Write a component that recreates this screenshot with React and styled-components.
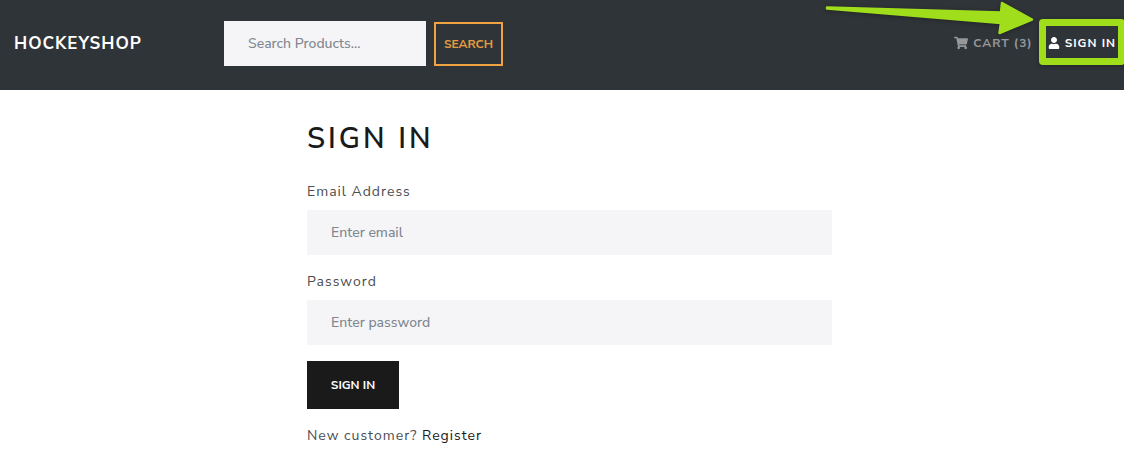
import React from "react";
import styled, { createGlobalStyle } from "styled-components";
import { FaShoppingCart, FaUser } from "react-icons/fa";

const GlobalStyle = createGlobalStyle`
  *, *::before, *::after { box-sizing: border-box; }
  body {
    margin: 0;
    background: #fff;
    color: #4a4e51;
    font-family: "Nunito Sans", Nunito, Lato, "Open Sans", sans-serif;
    font-size: 14px;
    line-height: 21px;
    letter-spacing: 1px;
  }
  input, button { font-family: inherit; border-radius: 0; margin: 0; }
`;

const Header = styled.header`
  position: relative;
  display: flex;
  align-items: center;
  height: 90px;
  padding: 0 8px 4px 14px;
  background: #2f3438;
  overflow: hidden;
`;

const Brand = styled.a`
  flex: 0 0 210px;
  padding-top: 2px;
  color: #fff;
  font-size: 17px;
  line-height: 28px;
  font-weight: 700;
  text-decoration: none;
  text-transform: uppercase;
`;

const SearchForm = styled.form`
  display: flex;
  align-items: flex-end;
  gap: 8px;
`;

const TextInput = styled.input`
  display: block;
  width: ${(p) => p.$width || "100%"};
  height: 45px;
  padding: 0 24px;
  border: 0;
  background: #f5f5f8;
  color: #55595c;
  font-size: 14px;
  font-weight: 500;
  letter-spacing: 0;
  &::placeholder { color: #7f878f; opacity: 1; }
`;

const SearchButton = styled.button`
  width: 69px;
  height: 44px;
  padding: 0;
  border: 2px solid #f0a441;
  background: transparent;
  color: #e59d40;
  font-size: 12px;
  font-weight: 700;
  text-transform: uppercase;
  cursor: pointer;
`;

const Nav = styled.nav`
  display: flex;
  gap: 15px;
  margin-left: auto;
`;

const NavLink = styled.a`
  display: flex;
  align-items: center;
  gap: 5px;
  color: ${(p) => (p.$active ? "#fff" : "#95989a")};
  font-size: 12px;
  line-height: 18px;
  font-weight: 700;
  text-decoration: none;
  text-transform: uppercase;
  white-space: nowrap;
`;

const Highlight = styled.div`
  position: absolute;
  top: 19px;
  right: -1px;
  width: 86px;
  height: 46px;
  border: 7px solid #a0de1c;
  border-radius: 4px;
  box-shadow: 0 1px 5px rgba(0, 0, 0, 0.3);
  pointer-events: none;
`;

const Arrow = styled.svg`
  position: absolute;
  top: 0;
  right: 84px;
  pointer-events: none;
  filter: drop-shadow(0 1px 2px rgba(0, 0, 0, 0.3));
`;

const Main = styled.main`
  padding: 30px 0 20px 15px;
`;

const Panel = styled.div`
  width: 100%;
  max-width: 525px;
  margin: 0 auto;
`;

const Title = styled.h1`
  margin: 0 0 23px;
  color: #1a1a1a;
  font-size: 29px;
  line-height: 38px;
  font-weight: 600;
  letter-spacing: 3px;
  text-transform: uppercase;
`;

const Field = styled.div`
  margin-bottom: 16px;
`;

const Label = styled.label`
  display: block;
  margin-bottom: 8px;
`;

const SubmitButton = styled.button`
  display: block;
  width: 92px;
  height: 48px;
  padding: 0;
  border: 0;
  background: #1a1a1a;
  color: #fff;
  font-size: 12px;
  font-weight: 700;
  text-transform: uppercase;
  cursor: pointer;
`;

const Hint = styled.p`
  margin: 16px 0 0;
`;

const TextLink = styled.a`
  color: #1a1a1a;
  text-decoration: none;
`;

const stop = (e) => e.preventDefault();

export default function App() {
  return (
    <>
      <GlobalStyle />
      <Header>
        <Brand href="#home">HockeyShop</Brand>
        <SearchForm onSubmit={stop}>
          <TextInput type="text" $width="202px" placeholder="Search Products..." aria-label="Search products" />
          <SearchButton type="submit">Search</SearchButton>
        </SearchForm>
        <Nav>
          <NavLink href="#cart"><FaShoppingCart size={14} />Cart (3)</NavLink>
          <NavLink href="#login" $active><FaUser size={12} />Sign In</NavLink>
        </Nav>
        <Arrow width="216" height="40" viewBox="0 0 216 40" aria-hidden="true">
          <path
            d="M3 7.500L177 12.500L178 3L208 19.500L175.500 33L177 23L3 8.500Z"
            fill="#a0de1c"
            stroke="#a0de1c"
            strokeWidth="2.500"
            strokeLinejoin="round"
          />
        </Arrow>
        <Highlight />
      </Header>
      <Main>
        <Panel>
          <Title>Sign In</Title>
          <form onSubmit={stop}>
            <Field>
              <Label htmlFor="email">Email Address</Label>
              <TextInput id="email" type="email" placeholder="Enter email" />
            </Field>
            <Field>
              <Label htmlFor="password">Password</Label>
              <TextInput id="password" type="password" placeholder="Enter password" />
            </Field>
            <SubmitButton type="submit">Sign In</SubmitButton>
          </form>
          <Hint>New customer? <TextLink href="#register">Register</TextLink></Hint>
        </Panel>
      </Main>
    </>
  );
}
